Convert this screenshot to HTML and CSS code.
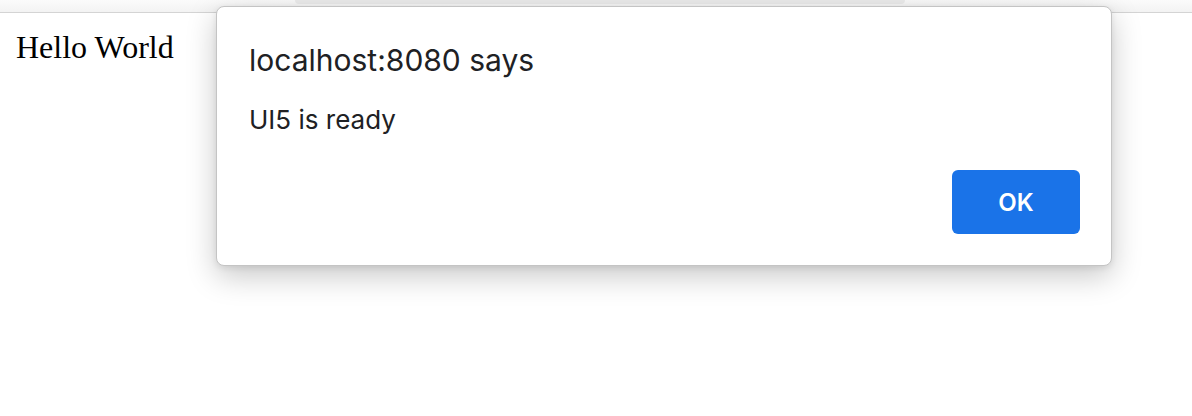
FILE: index.html
```html
<!DOCTYPE html>
<html>
<head>
<meta charset="utf-8">
<link rel="stylesheet" href="styles.css">
</head>
<body>
<div class="chrome"><div class="pill"></div></div>
<main class="page">
  <p class="hello">Hello World</p>
</main>
<div class="dialog" role="dialog">
  <div class="title">localhost:8080 says</div>
  <div class="message">UI5 is ready</div>
  <div class="actions"><button class="ok">OK</button></div>
</div>
</body>
</html>
```

FILE: styles.css
```css
html, body {
  margin: 0;
  padding: 0;
  background: #ffffff;
  width: 1192px;
  height: 416px;
  overflow: hidden;
}
.chrome {
  height: 12px;
  background: linear-gradient(#fbfbfb, #f3f3f3);
  border-bottom: 1px solid #d4d4d4;
  display: flex;
  justify-content: center;
}
.pill {
  width: 610px;
  height: 4px;
  margin-left: 8px;
  background: #ececec;
  border-radius: 0 0 12px 12px;
}
.page {
  padding: 0 16px;
}
.hello {
  margin: 18px 0 0;
  font-family: "Liberation Serif", "Times New Roman", serif;
  font-size: 32px;
  line-height: 32px;
  color: #000;
}
.dialog {
  position: absolute;
  left: 216px;
  top: 6px;
  width: 894px;
  height: 258px;
  box-sizing: content-box;
  background: #fff;
  border: 1px solid #c4c4c4;
  border-radius: 8px;
  box-shadow: 0 10px 30px rgba(0,0,0,0.22), 0 2px 6px rgba(0,0,0,0.08);
  font-family: Inter, "Noto Sans", sans-serif;
  color: #202124;
  display: flex;
  flex-direction: column;
  padding: 0;
}
.title {
  margin: 35px 0 0 32px;
  font-size: 30px;
  line-height: 36px;
}
.message {
  margin: 26px 0 0 32px;
  font-size: 26px;
  line-height: 32px;
}
.actions {
  display: flex;
  justify-content: flex-end;
  margin: 34px 31px 0 0;
}
.ok {
  width: 128px;
  height: 64px;
  border: none;
  border-radius: 6px;
  background: #1a73e8;
  color: #fff;
  font-family: Inter, "Noto Sans", sans-serif;
  font-size: 24px;
  font-weight: 600;
  padding: 0;
}
```
